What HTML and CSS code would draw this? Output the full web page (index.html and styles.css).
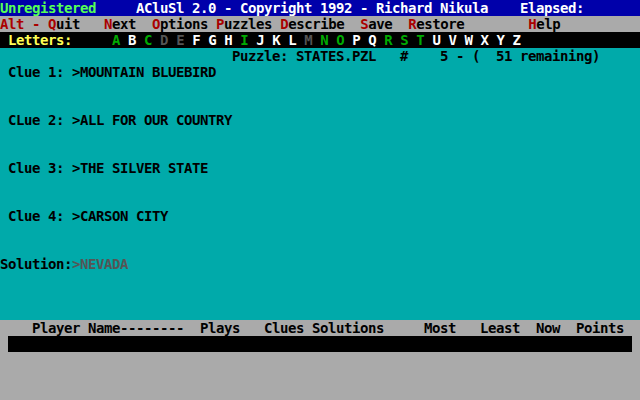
FILE: index.html
```html
<!DOCTYPE html>
<html>
<head>
<meta charset="utf-8">
<link rel="stylesheet" href="styles.css">
</head>
<body>
<div class="screen">
  <div class="row title"><span class="bgreen">Unregistered</span>     ACluSl 2.0 - Copyright 1992 - Richard Nikula    Elapsed:</div>
  <div class="row menu"><span class="hk">Alt - Q</span>uit   <span class="hk">N</span>ext  <span class="hk">O</span>ptions <span class="hk">P</span>uzzles <span class="hk">D</span>escribe  <span class="hk">S</span>ave  <span class="hk">R</span>estore        <span class="hk">H</span>elp</div>
  <div class="row letters"> <span class="yellow">Letters:</span>     <span class="used">A</span> B <span class="used">C</span> <span class="gone">D</span> <span class="gone">E</span> F G H <span class="used">I</span> J K L <span class="gone">M</span> <span class="used">N</span> <span class="used">O</span> P Q <span class="used">R</span> <span class="used">S</span> <span class="used">T</span> U V W X Y Z</div>
  <div class="main">
    <div class="row">                             Puzzle: STATES.PZL   #    5 - (  51 remaining)</div>
    <div class="row"> Clue 1: &gt;MOUNTAIN BLUEBIRD</div>
    <div class="row"></div>
    <div class="row"></div>
    <div class="row"> CLue 2: &gt;ALL FOR OUR COUNTRY</div>
    <div class="row"></div>
    <div class="row"></div>
    <div class="row"> Clue 3: &gt;THE SILVER STATE</div>
    <div class="row"></div>
    <div class="row"></div>
    <div class="row"> Clue 4: &gt;CARSON CITY</div>
    <div class="row"></div>
    <div class="row"></div>
    <div class="row">Solution:<span class="gone">&gt;NEVADA</span></div>
  </div>
  <div class="footer">
    <div class="row">    Player Name--------  Plays   Clues Solutions     Most   Least  Now  Points</div>
    <div class="row bar"></div>
  </div>
</div>
</body>
</html>
```
FILE: styles.css
```css
html, body {
  margin: 0;
  padding: 0;
  background: #000;
}
.screen {
  width: 640px;
  height: 400px;
  display: flex;
  flex-direction: column;
  overflow: hidden;
  font-family: "DejaVu Sans Mono", monospace;
  font-weight: bold;
  font-size: 14px;
  letter-spacing: -0.4277px;
  line-height: 16px;
  color: #000;
}
.row {
  height: 16px;
  white-space: pre;
  overflow: hidden;
}
.title {
  background: #0000AA;
  color: #FFFFFF;
}
.bgreen { color: #55FF55; }
.menu {
  background: #AAAAAA;
  color: #000;
}
.hk { color: #AA0000; }
.letters {
  background: #000;
  color: #FFFFFF;
}
.yellow { color: #FFFF55; }
.used { color: #00AA00; }
.gone { color: #555555; }
.main {
  background: #00AAAA;
  height: 272px;
  color: #000;
}
.footer {
  flex: 1;
  background: #AAAAAA;
  color: #000;
}
.bar {
  background: #000;
  margin: 0 8px;
}
```
